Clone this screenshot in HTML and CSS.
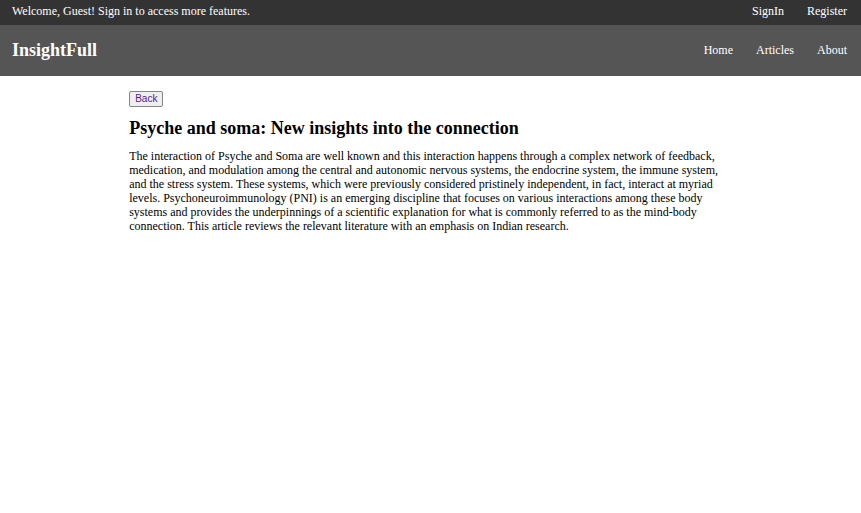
FILE: index.html
```html
<!DOCTYPE html>
<html lang="en">
<head>
<meta charset="utf-8">
<title>InsightFull</title>
<link rel="stylesheet" href="styles.css">
</head>
<body>
<div class="topbar">
  <span>Welcome, Guest! Sign in to access more features.</span>
  <nav class="links">
    <a href="#signin">SignIn</a>
    <a href="#register">Register</a>
  </nav>
</div>
<header class="header">
  <div class="brand">InsightFull</div>
  <nav class="links">
    <a href="#home">Home</a>
    <a href="#articles">Articles</a>
    <a href="#about">About</a>
  </nav>
</header>
<main class="article">
  <button class="back" type="button">Back</button>
  <h1>Psyche and soma: New insights into the connection</h1>
  <p>The interaction of Psyche and Soma are well known and this interaction happens through a complex network of feedback, medication, and modulation among the central and autonomic nervous systems, the endocrine system, the immune system, and the stress system. These systems, which were previously considered pristinely independent, in fact, interact at myriad levels. Psychoneuroimmunology (PNI) is an emerging discipline that focuses on various interactions among these body systems and provides the underpinnings of a scientific explanation for what is commonly referred to as the mind-body connection. This article reviews the relevant literature with an emphasis on Indian research.</p>
</main>
</body>
</html>
```

FILE: styles.css
```css
* {
  box-sizing: border-box;
}

body {
  margin: 0;
  background: #fff;
  color: #000;
  font: 12px/14px "Liberation Serif", serif;
}

.topbar,
.header {
  display: flex;
  align-items: center;
  justify-content: space-between;
  padding: 4px 14px 7px 12px;
  background: #333;
  color: #fff;
}

.header {
  padding-top: 15px;
  padding-bottom: 16px;
  background: #555;
}

.brand {
  font-size: 18px;
  line-height: 20px;
  font-weight: bold;
}

.links {
  display: flex;
  gap: 23px;
}

.links a {
  color: inherit;
  text-decoration: none;
}

.article {
  width: 70%;
  margin: 0 auto;
  padding: 15px 0;
}

.back {
  display: block;
  padding: 1px 5px;
  border: 1px solid #858585;
  border-radius: 2px;
  background: #efefef;
  color: #551a8b;
  font: 10px/12px "Liberation Sans", sans-serif;
}

h1 {
  margin: 11px 0 10px;
  font-size: 18px;
  line-height: 21px;
}

p {
  margin: 0;
}
```
